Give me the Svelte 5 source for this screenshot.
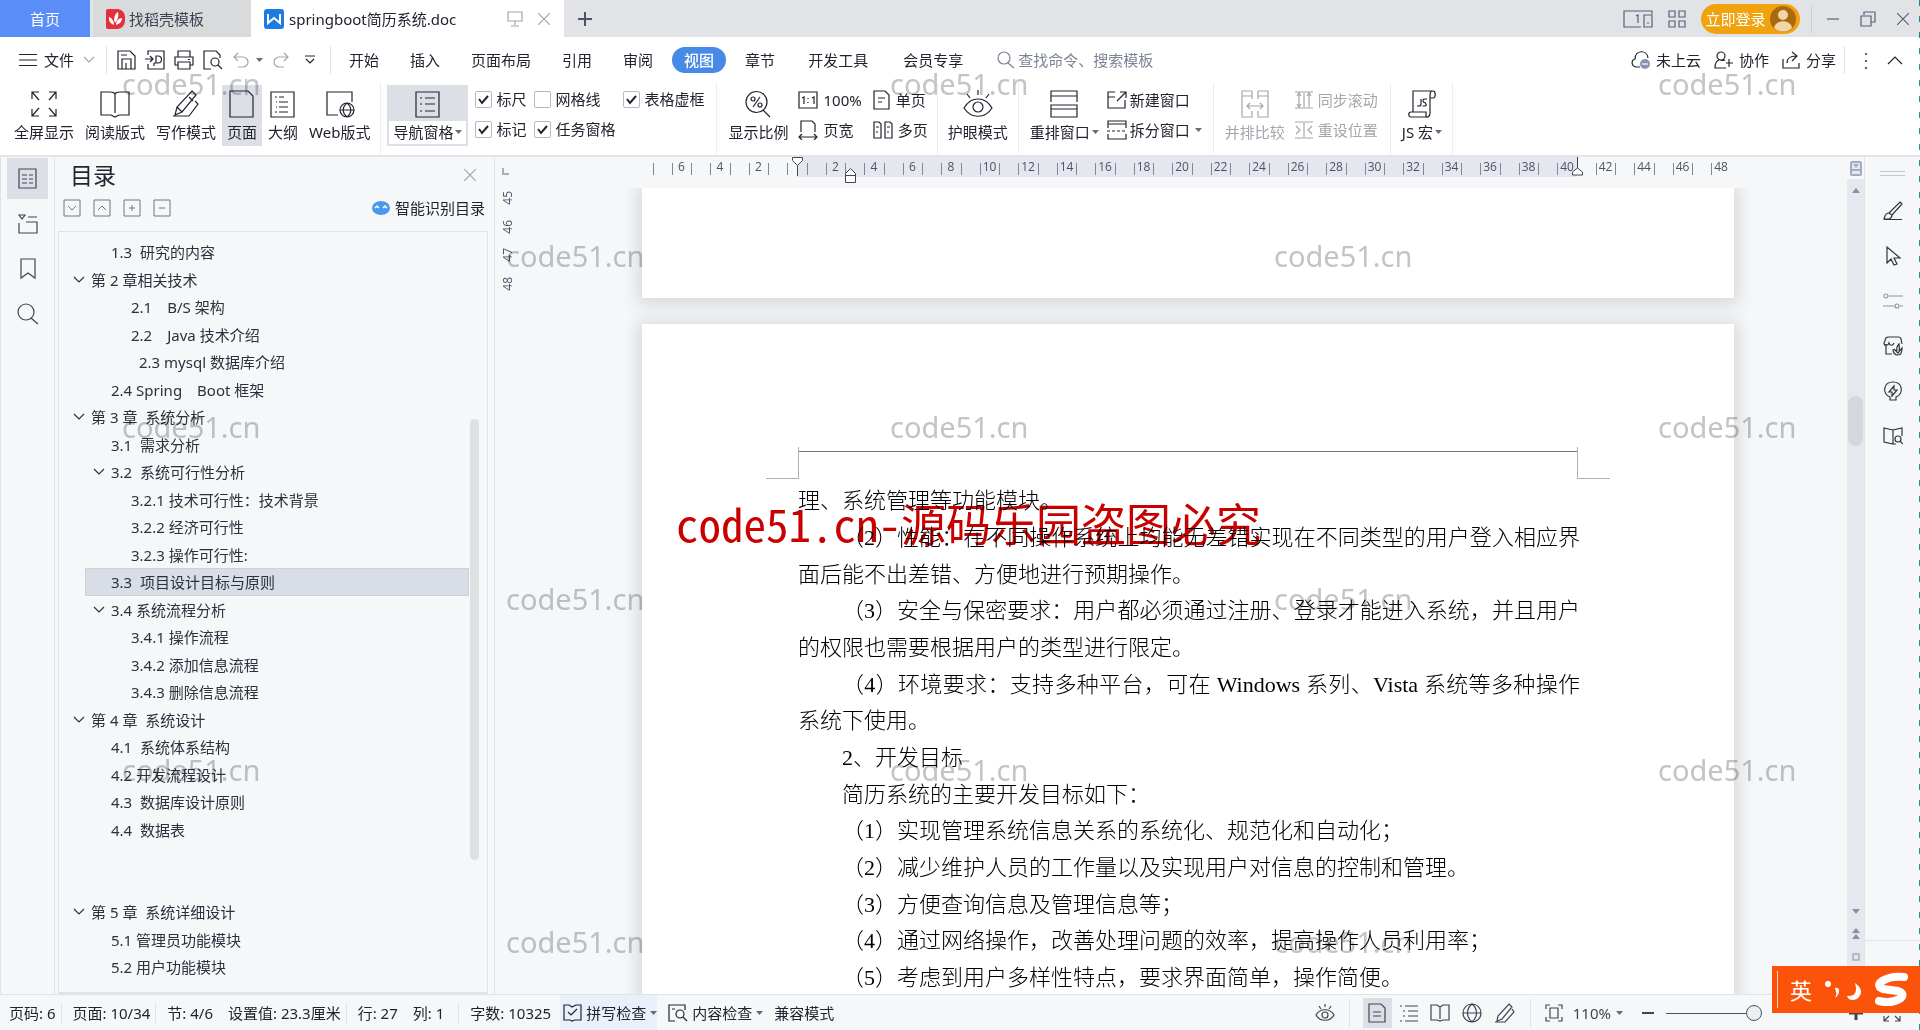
<script>
  // [width, height, path]
  const icons = {
    menu: [18, 14, 'M0 1.5h18M0 7h18M0 12.5h18'],
    down: [12, 8, 'M1 1l5 5 5-5'],
    up: [16, 10, 'M1 9l7-7 7 7'],
    save: [19, 20, 'M1 1h12l5 5v13H1zM5 19V9h9v10M9 13v6M4 5h6'],
    pdf: [20, 20, 'M3 5V1h16v18H3v-5M0 9h8M5 6l3 3-3 3M9 16v-3M11 13V6h2a3 3 0 010 7h-4'],
    print: [20, 20, 'M4 7V1h12v6M4 15H1V7h18v8h-3M4 12h12v7H4zM14 9.500h2'],
    preview: [20, 20, 'M8 19H1V1h12l4 4v3M16 12a4 4 0 11-8 0 4 4 0 018 0M15 15l4 4'],
    undo: [16, 16, 'M5 1L1 5l4 4M1 5h9a5 5 0 010 10H5'],
    redo: [16, 16, 'M11 1l4 4-4 4M15 5H6a5 5 0 000 10h5'],
    more: [10, 10, 'M0 1h10M1 4l4 4 4-4'],
    search: [18, 18, 'M13 7A6 6 0 111 7a6 6 0 0112 0M11 12l6 5'],
    lookup: [22, 22, 'M17 9A8 8 0 111 9a8 8 0 0116 0M14 15l7 6'],
    collab: [20, 18, 'M11 5a4 4 0 11-8 0 4 4 0 018 0M5 9c-3 1-4 3-4 8h11M6 9q3 1 5 0M12 12h7M15 8v8'],
    share: [19, 18, 'M1 8v9h16v-5M5 12c0-5 3-7 9-7M10 1l5 4-5 5'],
    full: [28, 28, 'M2 9V2h7M2 2l7 8M19 2h7v7M26 2l-7 8M2 19v7h7M2 26l7-8M26 19v7h-7M26 26l-7-8'],
    book: [30, 28, 'M15 4c-1-2-3-2-5-2H1v23h10l4 2 4-2h10V2h-9c-2 0-4 0-5 2zM15 4v19'],
    pen: [28, 28, 'M20 1l4 4L10 22l-7 3 2-8zM5 17l5 5M17 7l4 4M23 11l3 3-9 12H1'],
    page: [28, 28, 'M2 1h18l5 5v21H2z'],
    outline: [28, 28, 'M2 2h23v25H2zM6 7h2M10 7h5M10 12h9M10 17h9M6 22h2M10 22h9M7 12h1M7 17h1'],
    web: [30, 28, 'M13 25H2V2h25v10M29 20a7 7 0 11-14 0 7 7 0 0114 0M15 20h14M22 13c-5 4-5 10 0 14M22 13c5 4 5 10 0 14'],
    nav: [28, 28, 'M2 2h23v25H2zM6 8h2M6 14h2M6 21h2M11 8h10M11 14h10M11 21h10'],
    ratio: [28, 28, 'M23 12a10.500 10.500 0 11-21 0 10.500 10.500 0 0121 0M19 20l7 7M16 7L9 17M11 9a2 2 0 11-4 0 2 2 0 014 0M18 15a2 2 0 11-4 0 2 2 0 014 0'],
    one: [20, 18, 'M1 1h18v16H1zM4 7l2-1v7M14 7l2-1v7M10 7v1M10 11v1'],
    fit: [20, 20, 'M3 12V1h11l3 3v8M1 17h18M4 14l-3 3 3 3M16 14l3 3-3 3'],
    single: [18, 20, 'M1 1h11l4 4v14H1zM5 8h7M5 12h4'],
    multi: [20, 18, 'M1 1h5l2 2v14H1zM12 1h5l2 2v14h-7zM3 6h3M3 11h2M14 6h3M14 11h2'],
    eye: [30, 28, 'M1 18C8 6 22 6 29 18 22 29 8 29 1 18zM20 17a5 5 0 11-10 0 5 5 0 0110 0M15 0v5M4 4l3 4M26 4l-3 4'],
    arrange: [28, 28, 'M1 12V1h26v11M1 6h26M1 15h26v12H1zM1 19h26'],
    newwin: [20, 18, 'M8 1H1v16h17V9M1 6h7M10 10l9-9M13 1h6v6'],
    split: [20, 20, 'M1 8V1h18v7M1 4h18M0 11h3M5 11h3M10 11h3M15 11h3M1 14v5h18v-5'],
    compare: [28, 28, 'M11 1H1v26h10v-6M17 1h10v26H17v-6M11 1v8M17 1v8M1 6h10M17 6h10M6 16h16M9 13l-3 3 3 3M19 13l3 3-3 3'],
    sync: [18, 18, 'M0 1h18M0 17h18M4 2v14M9 2v14M14 2v14M2 5l2-3 2 3M2 13l2 3 2-3M12 5l2-3 2 3'],
    reset: [18, 18, 'M0 1h18M0 17h18M9 2v14M1 5l4 4-4 4M17 5l-4 4 4 4'],
    js: [28, 28, 'M5 22V1h20c3 0 3 7 0 7h-3v15c0 5-4 4-4 4H3c-3 0-3-5 0-5h15v5M25 1c-3 0-3 2-3 7M9 16h2q2 0 2-2V9M19 9h-2q-3 0-1.500 3l2 1q2 3-1 3h-2'],
    panel: [20, 21, 'M1 1h17v19H1zM4 7h5M4 11h5M4 15h5M11 7h4M11 11h4M11 15h4'],
    tabs: [20, 20, 'M1 1h6L4 5zM10 3h9M1 9v10h18V8H8'],
    bookmark: [16, 22, 'M1 1h14v19l-7-5-7 5z'],
    brush: [20, 20, 'M17 1l2 2L9 14l-3-2zM6 12c-4 0-4 3-5 6h5c3-1 3-3 3-4M1 18.500h18'],
    cursor: [18, 20, 'M3 1v16l4-4 3 6 3-1-3-6h6z'],
    sliders: [20, 16, 'M5 3a2 2 0 11-4 0 2 2 0 014 0M6 3h14M0 13h11M16 13a2 2 0 11-4 0 2 2 0 014 0M17 13h3'],
    shop: [20, 20, 'M3 8v10h6M1 7l2-5q0-1 3-1h9q3 0 3 2l1 5M1 7c0 3 4 3 5 0 1 3 4 3 5 0M10 13c0 4 1 6 5 6 3 0 4-2 4-7l-4 5-4-4M14 15c-1-4 1-6 2-7 0 2 1 4 0 7'],
    bulb: [20, 20, 'M7 19v-3C-1 13 0 1 10 1s11 12 3 15v3zM11 5l-5 6h3v4l5-6h-3z'],
    find: [20, 18, 'M10 3L1 1v14l9 2V3l9-2v8M10 17h3M18 12a3 3 0 11-6 0 3 3 0 016 0M17 14l3 3'],
    spell: [19, 18, 'M9 3L6 1H1v15h6l2 1 3-1h6V1h-5zM5 8l3 3 6-6'],
    check: [20, 18, 'M7 17H1V1h16v5M16 10a4 4 0 11-8 0 4 4 0 018 0M15 13l4 4M4 5h3'],
    seye: [20, 20, 'M1 12C5 5 15 5 19 12 15 19 5 19 1 12zM13 12a3 3 0 11-6 0 3 3 0 016 0M10 1v3M4 3l2 3M16 3l-2 3'],
    sdoc: [18, 20, 'M1 1h12l4 4v14H1zM5 9h8M5 13h8'],
    slist: [18, 18, 'M0 2h2M5 2h13M3 7h2M8 7h10M3 12h2M8 12h10M0 17h2M5 17h13'],
    sbook: [20, 18, 'M10 3L7 1H1v15h6l3 1 3-1h6V1h-6zM10 3v12'],
    globe: [20, 20, 'M19 10a9 9 0 11-18 0 9 9 0 0118 0M1 10h18M10 1c-6 5-6 13 0 18M10 1c6 5 6 13 0 18'],
    spen: [22, 20, 'M15 1l3 3L8 16l-5 2 1-5zM1 19h10L20 9l-2-3'],
    frame: [18, 18, 'M1 5V1h4M13 1h4v4M1 13v4h4M17 13v4h-4M5 4h8v10H5z'],
    sfull: [18, 18, 'M1 6V1h5M1 1l5 5M12 1h5v5M17 1l-5 5M1 12v5h5M1 17l5-5M17 12v5h-5M17 17l-5-5'],
    close: [12, 12, 'M0 0l12 12M12 0L0 12'],
    screen: [16, 16, 'M1 1h14v9H1zM8 10v4M4 15h8'],
    plus: [14, 14, 'M7 0v14M0 7h14'],
    device: [30, 18, 'M18 17H1V1h28v3M13 6l2-1v8M21 5h8v12h-8zM24 13h2'],
    grid: [18, 18, 'M1 1h6v6H1zM11 1h6v6h-6zM1 11h6v6H1zM11 11h6v6h-6z'],
    min: [12, 2, 'M0 1h12'],
    restore: [16, 16, 'M4 4V1h11v10h-4M1 5h10v10H1z'],
    boxdown: [18, 18, 'M1 1h16v16H1zM5 7l4 4 4-4'],
    boxup: [18, 18, 'M1 1h16v16H1zM5 11l4-4 4 4'],
    boxplus: [18, 18, 'M1 1h16v16H1zM9 6v6M6 9h6'],
    boxminus: [18, 18, 'M1 1h16v16H1zM6 9h6'],
  };

  const quick = ['save', 'pdf', 'print', 'preview'];
  const menus = ['开始', '插入', '页面布局', '引用', '审阅', '视图', '章节', '开发工具', '会员专享'];

  const views = [
    { icon: 'full', label: '全屏显示' },
    { icon: 'book', label: '阅读版式' },
    { icon: 'pen', label: '写作模式' },
    { icon: 'page', label: '页面', active: true },
    { icon: 'outline', label: '大纲' },
    { icon: 'web', label: 'Web版式' },
  ];

  let shows = [
    { label: '标尺', checked: true },
    { label: '网格线', checked: false },
    { label: '表格虚框', checked: true },
    { label: '标记', checked: true },
    { label: '任务窗格', checked: true },
  ];

  const sideLeft = [
    { icon: 'panel', label: '目录' },
    { icon: 'tabs', label: '章节' },
    { icon: 'bookmark', label: '书签' },
    { icon: 'lookup', label: '查找' },
  ];
  const sideRight = ['brush', 'cursor', 'sliders', 'shop', 'bulb', 'find'];

  // indent is the left edge of the text inside the list
  const tree = [
    { indent: 52, text: '1.3  研究的内容' },
    { indent: 32, text: '第 2 章相关技术', open: true },
    { indent: 72, text: '2.1\u3000B/S 架构' },
    { indent: 72, text: '2.2\u3000Java 技术介绍' },
    { indent: 80, text: '2.3 mysql 数据库介绍' },
    { indent: 52, text: '2.4 Spring\u3000Boot 框架' },
    { indent: 32, text: '第 3 章  系统分析', open: true },
    { indent: 52, text: '3.1  需求分析' },
    { indent: 52, text: '3.2  系统可行性分析', open: true },
    { indent: 72, text: '3.2.1 技术可行性：技术背景' },
    { indent: 72, text: '3.2.2 经济可行性' },
    { indent: 72, text: '3.2.3 操作可行性:' },
    { indent: 52, text: '3.3  项目设计目标与原则', selected: true },
    { indent: 52, text: '3.4 系统流程分析', open: true },
    { indent: 72, text: '3.4.1 操作流程' },
    { indent: 72, text: '3.4.2 添加信息流程' },
    { indent: 72, text: '3.4.3 删除信息流程' },
    { indent: 32, text: '第 4 章  系统设计', open: true },
    { indent: 52, text: '4.1  系统体系结构' },
    { indent: 52, text: '4.2 开发流程设计' },
    { indent: 52, text: '4.3  数据库设计原则' },
    { indent: 52, text: '4.4  数据表' },
    { indent: 52, text: '' },
    { indent: 52, text: '' },
    { indent: 32, text: '第 5 章  系统详细设计', open: true },
    { indent: 52, text: '5.1 管理员功能模块' },
    { indent: 52, text: '5.2 用户功能模块' },
  ];

  const lines = [
    { text: '理、系统管理等功能模块。' },
    { text: '（2）性能：在不同操作系统上均能无差错实现在不同类型的用户登入相应界', indent: true, full: true },
    { text: '面后能不出差错、方便地进行预期操作。' },
    { text: '（3）安全与保密要求：用户都必须通过注册、登录才能进入系统，并且用户', indent: true, full: true },
    { text: '的权限也需要根据用户的类型进行限定。' },
    { text: '（4）环境要求：支持多种平台，可在 Windows 系列、Vista 系统等多种操作', indent: true, full: true },
    { text: '系统下使用。' },
    { text: '2、开发目标', indent: true },
    { text: '简历系统的主要开发目标如下：', indent: true },
    { text: '（1）实现管理系统信息关系的系统化、规范化和自动化；', indent: true },
    { text: '（2）减少维护人员的工作量以及实现用户对信息的控制和管理。', indent: true },
    { text: '（3）方便查询信息及管理信息等；', indent: true },
    { text: '（4）通过网络操作，改善处理问题的效率，提高操作人员利用率；', indent: true },
    { text: '（5）考虑到用户多样性特点，要求界面简单，操作简便。', indent: true },
  ];

  // ruler geometry, measured from the left edge of the sheet
  const zero = 155;
  const unit = 19.25;
  const numbers = [];
  const ticks = [];
  for (let n = -6; n <= 48; n += 2) {
    if (n !== 0) numbers.push({ n: Math.abs(n), x: zero + n * unit });
  }
  for (let n = -7.5; n < 48; n += 1) {
    ticks.push(Math.round(zero + n * unit));
  }

  const stamps = [];
  for (let row = 0; row < 6; row++) {
    const odd = row % 2 === 1;
    for (let col = 0; col < (odd ? 2 : 3); col++) {
      stamps.push({ x: (odd ? 506 : 122) + col * 768, y: Math.round(64 + row * 171.5) });
    }
  }

  let zoom = 100;
</script>

{#snippet icon(name)}
  <svg class="ico" width={icons[name][0]} height={icons[name][1]} viewBox="0 0 {icons[name][0]} {icons[name][1]}" aria-hidden="true">
    <path d={icons[name][2]} />
  </svg>
{/snippet}

{#snippet caret()}
  <svg class="caret" width="7" height="4" viewBox="0 0 7 4" aria-hidden="true"><path d="M0 0h7L3.500 4z" /></svg>
{/snippet}

<div class="app" lang="zh-CN">
  <header class="titlebar">
    <button class="tab home">首页</button>
    <button class="tab docer">
      <svg width="19" height="20" viewBox="0 0 19 20" aria-hidden="true">
        <path fill="#e5303c" d="M2 0h9a8 8 0 018 8v4a8 8 0 01-8 8H2a2 2 0 01-2-2V2a2 2 0 012-2z" />
        <path fill="#fff" d="M8 16C2 14 3 9 3 8c3 1 5 4 5 8zM9 14c-2-5 0-9 3-11 1 4 0 8-3 11zM10 16c0-4 3-7 6-7 0 4-3 6-6 7z" />
      </svg>
      找稻壳模板
    </button>
    <div class="tab file">
      <svg width="20" height="20" viewBox="0 0 20 20" aria-hidden="true">
        <rect width="20" height="20" rx="3" fill="#1c7be6" />
        <path fill="none" stroke="#fff" stroke-width="2" d="M4 5v9l6-5 6 5V5" />
      </svg>
      <span class="name">springboot简历系统.doc</span>
      <button class="dim" aria-label="投屏">{@render icon('screen')}</button>
      <button class="dim" aria-label="关闭标签">{@render icon('close')}</button>
    </div>
    <button class="add" aria-label="新建">{@render icon('plus')}</button>
    <div class="window">
      <button aria-label="设备">{@render icon('device')}</button>
      <button aria-label="应用">{@render icon('grid')}</button>
      <button class="login">
        立即登录
        <svg width="26" height="26" viewBox="0 0 26 26" aria-hidden="true">
          <circle cx="13" cy="13" r="13" fill="#a8690f" />
          <circle cx="13" cy="9" r="5" fill="#f3d6a6" />
          <path fill="#f3d6a6" d="M4 22c1-9 17-9 18 0a13 13 0 01-18 0z" />
        </svg>
      </button>
      <i class="bar"></i>
      <button aria-label="最小化">{@render icon('min')}</button>
      <button class="restore" aria-label="还原">{@render icon('restore')}</button>
      <button aria-label="关闭">{@render icon('close')}</button>
    </div>
  </header>

  <nav class="menubar">
    <button class="filemenu">{@render icon('menu')} 文件 <span class="faint">{@render icon('down')}</span></button>
    <i class="bar"></i>
    <div class="quick">
      {#each quick as name}
        <button aria-label={name}>{@render icon(name)}</button>
      {/each}
      <button class="faint" aria-label="撤销">{@render icon('undo')}{@render caret()}</button>
      <button class="faint" aria-label="恢复">{@render icon('redo')}</button>
      <button class="last" aria-label="更多">{@render icon('more')}</button>
    </div>
    <i class="bar"></i>
    <div class="menus">
      {#each menus as m, i}
        <button class:pill={m === '视图'} class:wide={i > 6}>{m}</button>
      {/each}
    </div>
    <label class="search">
      {@render icon('search')}
      <input type="text" placeholder="查找命令、搜索模板" />
    </label>
    <div class="cloud">
      <button>
        <svg class="ico" width="20" height="20" viewBox="0 0 20 20" aria-hidden="true">
          <path d="M9 17H5C0 16 0 10 4 9c0-9 12-10 13-1" />
          <circle cx="14" cy="14" r="5" fill="#8a93b5" stroke="none" />
          <path stroke="#fff" d="M11 14h6" />
        </svg>
        未上云
      </button>
      <button>{@render icon('collab')} 协作</button>
      <button>{@render icon('share')} 分享</button>
      <i class="bar"></i>
      <button class="dots" aria-label="更多选项">⋮</button>
      <button aria-label="收起功能区">{@render icon('up')}</button>
    </div>
  </nav>

  <section class="ribbon">
    <div class="group first">
      {#each views as v}
        <button class="big" class:active={v.active}>{@render icon(v.icon)}<span>{v.label}</span></button>
      {/each}
    </div>
    <div class="group shows">
      <button class="big navpane">{@render icon('nav')}<span>导航窗格{@render caret()}</span></button>
      <div class="checks">
        {#each shows as s}
          <label><input type="checkbox" bind:checked={s.checked} />{s.label}</label>
        {/each}
      </div>
    </div>
    <div class="group ratio">
      <button class="big">{@render icon('ratio')}<span>显示比例</span></button>
      <div class="stack">
        <button>{@render icon('one')} 100%</button>
        <button>{@render icon('fit')} 页宽</button>
      </div>
      <div class="stack">
        <button>{@render icon('single')} 单页</button>
        <button>{@render icon('multi')} 多页</button>
      </div>
    </div>
    <div class="group care">
      <button class="big">{@render icon('eye')}<span>护眼模式</span></button>
    </div>
    <div class="group">
      <button class="big">{@render icon('arrange')}<span>重排窗口{@render caret()}</span></button>
      <div class="stack win">
        <button>{@render icon('newwin')} 新建窗口</button>
        <button>{@render icon('split')} 拆分窗口{@render caret()}</button>
      </div>
    </div>
    <div class="group off">
      <button class="big" disabled>{@render icon('compare')}<span>并排比较</span></button>
      <div class="stack">
        <button disabled>{@render icon('sync')} 同步滚动</button>
        <button disabled>{@render icon('reset')} 重设位置</button>
      </div>
    </div>
    <div class="group">
      <button class="big">{@render icon('js')}<span>JS 宏{@render caret()}</span></button>
    </div>
  </section>

  <main class="work">
    <aside class="strip">
      {#each sideLeft as s, i}
        <button class:active={i === 0} aria-label={s.label}>{@render icon(s.icon)}</button>
      {/each}
    </aside>

    <aside class="toc">
      <div class="toc-head">
        <h2>目录</h2>
        <button class="dim" aria-label="关闭目录">{@render icon('close')}</button>
      </div>
      <div class="toc-tools">
        <button aria-label="展开">{@render icon('boxdown')}</button>
        <button aria-label="收起">{@render icon('boxup')}</button>
        <button aria-label="增加">{@render icon('boxplus')}</button>
        <button aria-label="减少">{@render icon('boxminus')}</button>
        <button class="smart">
          <svg width="18" height="16" viewBox="0 0 18 16" aria-hidden="true">
            <ellipse cx="9" cy="8" rx="9" ry="7" fill="#4a98ee" />
            <path fill="none" stroke="#fff" stroke-width="1.500" d="M3 8l2-2 2 2M11 8l2-2 2 2" />
          </svg>
          智能识别目录
        </button>
      </div>
      <div class="tree">
        <ul>
          {#each tree as t}
            <li class:selected={t.selected} style="--indent: {t.indent}px">
              <span class="twist">{#if t.open}{@render icon('down')}{/if}</span>{t.text}
            </li>
          {/each}
        </ul>
        <div class="thumb"></div>
      </div>
    </aside>

    <section class="doc">
      <div class="hruler">
        <div class="corner"><span class="tabstop"></span></div>
        <div class="scale">
          <svg width="1092" height="31" viewBox="0 0 1092 31" aria-hidden="true">
            <rect class="live" x="155" y="0" width="780" height="20" />
            {#each ticks as x}
              <path class="tick" d="M{x + 0.5} 6v12" />
            {/each}
            {#each numbers as r}
              <text x={r.x} y="14">{r.n}</text>
            {/each}
            <path class="marker" d="M150.500 .5h10v3l-5 5-5-5zM155.500 8v11" />
            <path class="marker" d="M203.500 25.500v-9l5-5 5 5v9zM203.500 18.500h10" />
            <path class="marker" d="M935.500 0v11l-5 4v3h10v-3l-5-4" />
          </svg>
        </div>
      </div>
      <div class="canvas">
        <div class="vruler"><span>45</span><span>46</span><span>47</span><span>48</span></div>
        <div class="sheets">
          <article class="sheet tail"></article>
          <article class="sheet">
            <div class="corners"><i></i><b></b><i></i></div>
            <div class="text">
              {#each lines as l}
                <p class:indent={l.indent} class:full={l.full}>{l.text}</p>
              {/each}
            </div>
          </article>
        </div>
      </div>
    </section>

    <div class="vscroll">
      <button class="toggle" aria-label="标尺开关">
        <svg width="12" height="15" viewBox="0 0 12 15" aria-hidden="true">
          <rect x="1" y="1" width="10" height="13" rx="1" fill="#e4e8f0" stroke="#a3adc0" stroke-width="2" />
          <path fill="#a3adc0" d="M3 3h6L6 7zM1 8h10v2H1z" />
        </svg>
      </button>
      <div class="track">
        <svg width="8" height="5" viewBox="0 0 8 5" aria-hidden="true"><path d="M4 0l4 5H0z" /></svg>
        <div class="grip"></div>
        <svg width="8" height="5" viewBox="0 0 8 5" aria-hidden="true"><path d="M0 0h8L4 5z" /></svg>
        <svg width="8" height="11" viewBox="0 0 8 11" aria-hidden="true"><path d="M4 0l4 5H0zM4 6l4 5H0z" /></svg>
        <svg width="8" height="8" viewBox="0 0 8 8" aria-hidden="true"><rect x="1" y="1" width="6" height="6" fill="none" stroke="#8a90a3" /></svg>
      </div>
    </div>

    <aside class="tools">
      <i class="drag"></i>
      {#each sideRight as name}
        <button class:muted={name === 'sliders'} aria-label={name}>{@render icon(name)}</button>
      {/each}
      <i class="rule"></i>
    </aside>
  </main>

  <footer class="status">
    <span class="cell">页码: 6</span>
    <span class="cell">页面: 10/34</span>
    <span>节: 4/6</span>
    <span class="cell">设置值: 23.3厘米</span>
    <span>行: 27</span>
    <span class="cell count">列: 1</span>
    <span>字数: 10325</span>
    <div class="proof">
      <button class="spell">{@render icon('spell')} 拼写检查 {@render caret()}</button>
      <button>{@render icon('check')} 内容检查 {@render caret()}</button>
      <button>兼容模式</button>
    </div>
    <div class="modes">
      <button aria-label="护眼模式">{@render icon('seye')}</button>
      <i class="bar"></i>
      <button class="active" aria-label="页面视图">{@render icon('sdoc')}</button>
      <button aria-label="大纲视图">{@render icon('slist')}</button>
      <button aria-label="阅读版式">{@render icon('sbook')}</button>
      <button aria-label="Web版式">{@render icon('globe')}</button>
      <button aria-label="写作模式">{@render icon('spen')}</button>
      <i class="bar"></i>
      <button aria-label="最佳比例">{@render icon('frame')}</button>
      <button class="percent">110% {@render caret()}</button>
      <button class="step" aria-label="缩小">{@render icon('min')}</button>
      <input type="range" min="0" max="100" bind:value={zoom} aria-label="显示比例" />
      <button class="step plus" aria-label="放大">{@render icon('plus')}</button>
      <button aria-label="全屏">{@render icon('sfull')}</button>
    </div>
  </footer>

  <div class="overlay" aria-hidden="true">
    {#each stamps as s}
      <span class="stamp" style="left: {s.x}px; top: {s.y}px">code51.cn</span>
    {/each}
    <span class="notice">code51.cn-源码乐园盗图必究</span>
    <i class="edge"></i>
  </div>

  <div class="ime">
    <i></i>
    <span>英</span>
    <svg width="92" height="44" viewBox="0 0 92 44" aria-hidden="true">
      <circle cx="6" cy="16" r="3" fill="#fff" />
      <path fill="#fff" d="M13 20q4-1 4 3 0 4-4 7 2-4 1-6zM33 15q11 8 2 16-8 3-10-3 12 1 8-13z" />
      <path fill="none" stroke="#fff" stroke-width="8" stroke-linecap="round" d="M82 9C64 7 50 17 61 21l15 2c12 4-2 14-19 10" />
    </svg>
  </div>
</div>

<style>
  :global(body) {
    margin: 0;
    overflow: hidden;
  }

  .app {
    position: relative;
    display: flex;
    flex-direction: column;
    height: 100vh;
    overflow: hidden;
    background: #f5f7f9;
    color: #20242e;
    font-family: "Noto Sans", "Noto Sans CJK SC", sans-serif;
    font-size: 15px;
    line-height: 20px;
    white-space: nowrap;
  }

  button,
  input {
    font: inherit;
    color: inherit;
    margin: 0;
  }

  button {
    display: flex;
    align-items: center;
    justify-content: center;
    padding: 0;
    border: 0;
    background: none;
  }

  svg { flex: none; }

  .ico {
    fill: none;
    stroke: currentColor;
    stroke-width: 1.2;
  }

  .caret {
    fill: #666b76;
    margin-left: 2px;
  }

  .bar {
    width: 1px;
    height: 28px;
    background: #dfe1e5;
  }

  .dim, .faint { color: #a0a5ae; }

  /* title bar */
  .titlebar {
    display: flex;
    height: 37px;
    background: #e1e3e7;
  }

  .tab {
    display: flex;
    align-items: center;
  }

  .home {
    width: 90px;
    background: #5b8df8;
    color: #fff;
  }

  .docer {
    justify-content: flex-start;
    gap: 4px;
    width: 158px;
    margin-left: 3px;
    padding-left: 13px;
    background: #d9dadc;
    color: #3c4252;
  }

  .file {
    gap: 5px;
    width: 300px;
    padding-left: 13px;
    background: #fff;
  }

  .file .name { flex: 1; }
  .file .dim { margin-right: 10px; }
  .file .dim:last-child { margin-right: 14px; }

  .add {
    margin-left: 14px;
    color: #4d5466;
  }

  .add .ico { stroke-width: 2; }

  .window {
    display: flex;
    align-items: center;
    gap: 15px;
    margin-left: auto;
    padding-right: 11px;
    color: #59617a;
  }

  .window .bar { margin: 0 0 0 -4px; background: #c9ccd3; }
  .window .restore { margin: 0 6px; }

  .login {
    gap: 4px;
    width: 99px;
    height: 30px;
    border-radius: 15px;
    background: #f0a30f;
    color: #fff;
  }

  /* menu bar */
  .menubar {
    display: flex;
    align-items: center;
    height: 46px;
    background: #fff;
  }

  .filemenu {
    gap: 7px;
    padding: 0 11px 0 19px;
  }

  .filemenu .faint { display: flex; margin-left: 2px; }

  .quick {
    display: flex;
    align-items: center;
    gap: 9px;
    padding: 0 15px 0 10px;
  }

  .quick .faint { margin-left: 1px; }
  .quick .faint .caret { margin-left: 7px; }
  .quick .last { margin-left: 7px; }

  .menus {
    display: flex;
    gap: 7px;
    padding-left: 6px;
  }

  .menus button {
    height: 26px;
    padding: 0 12px;
    border-radius: 13px;
  }

  .menus .wide { padding: 0 14px; }

  .menus .pill {
    background: #4689e6;
    color: #fff;
    font-weight: 500;
  }

  .search {
    display: flex;
    align-items: center;
    gap: 3px;
    margin-left: 20px;
    color: #7d8496;
  }

  .search input {
    width: 150px;
    padding: 0;
    border: 0;
    outline: none;
    background: none;
  }

  .search input::placeholder { color: #7d8496; opacity: 1; }

  .cloud {
    display: flex;
    align-items: center;
    gap: 13px;
    margin-left: auto;
    padding-right: 17px;
  }

  .cloud button { gap: 5px; }
  .cloud .bar { margin-left: -5px; }
  .cloud .dots { width: 16px; font-size: 20px; color: #59617a; }

  /* ribbon */
  .ribbon {
    display: flex;
    height: 72px;
    background: #fff;
    border-bottom: 2px solid #e2e4e7;
  }

  .group {
    display: flex;
    gap: 1px;
    height: 61px;
    padding: 2px 5px 8px 6px;
    border-right: 1px solid #eceef1;
  }

  .first { padding-left: 9px; }
  .shows { padding-right: 12px; }
  .ratio { padding-right: 9px; }
  .care { padding-left: 5px; }

  .big {
    flex-direction: column;
    gap: 4px;
    height: 61px;
    padding: 0 5px;
  }

  .big span { display: flex; align-items: center; }

  .active { background: #dce0e6; }

  .navpane {
    border: 2px solid #dce0e6;
    background: linear-gradient(#dce0e6 34px, #fff 34px);
    padding: 0 4px;
  }

  .checks {
    display: grid;
    grid-template-columns: 59px 89px auto;
    align-content: space-between;
    height: 50px;
    padding: 4px 0 0 6px;
  }

  .checks label {
    display: flex;
    align-items: center;
    gap: 4px;
  }

  .checks input {
    appearance: none;
    width: 17px;
    height: 17px;
    border: 1px solid #b5b9c0;
    border-radius: 2px;
    background: #fff;
  }

  .checks input:checked {
    background: #fff url("data:image/svg+xml,%3Csvg xmlns='http://www.w3.org/2000/svg' viewBox='0 0 15 15'%3E%3Cpath d='M3 7l3 4 6-7' fill='none' stroke='%2320242e' stroke-width='2'/%3E%3C/svg%3E");
  }

  .stack {
    display: flex;
    flex-direction: column;
    justify-content: space-between;
    align-items: flex-start;
    height: 52px;
    padding: 4px 0 0 4px;
  }

  .stack + .stack { padding-left: 10px; }
  .stack button { gap: 5px; height: 22px; }
  .win { padding: 4px 6px 0 2px; }
  .win button { gap: 3px; }
  .off { color: #a3a6ac; padding-right: 12px; }
  .stack button:disabled, .big:disabled { color: #a3a6ac; }

  /* work area */
  .work {
    display: flex;
    flex: 1;
    min-height: 0;
  }

  .strip {
    display: flex;
    flex-direction: column;
    gap: 4px;
    box-sizing: border-box;
    width: 55px;
    padding: 1px 0 0 6px;
    border-left: 1px solid #dfe2e6;
    border-right: 1px solid #dfe2e6;
    color: #3f4554;
  }

  .strip button { width: 41px; height: 41px; }

  .toc {
    display: flex;
    flex-direction: column;
    box-sizing: border-box;
    width: 440px;
    padding: 0 6px 0 3px;
    border-right: 1px solid #dfe2e6;
  }

  .toc-head {
    display: flex;
    align-items: center;
    justify-content: space-between;
    height: 36px;
    padding: 0 12px;
  }

  h2 {
    margin: 0;
    font-size: 23px;
    font-weight: 400;
    line-height: 32px;
  }

  .toc-tools {
    display: flex;
    align-items: center;
    gap: 12px;
    height: 30px;
    padding: 0 3px 8px 5px;
    color: #6f7480;
  }

  .toc-tools .ico { stroke-width: 1; }

  .smart {
    gap: 5px;
    margin-left: auto;
    color: #20242e;
  }

  .tree {
    display: flex;
    flex: 1;
    min-height: 0;
    overflow: hidden;
    border: 1px solid #dfe2e6;
    border-bottom-width: 2px;
  }

  ul {
    flex: 1;
    margin: 0;
    padding: 6px 1px 0 0;
    list-style: none;
  }

  li {
    display: flex;
    align-items: center;
    height: 28px;
    white-space: pre;
    color: #2c313d;
  }

  li:nth-child(even) { height: 27px; }

  .twist {
    display: flex;
    width: 18px;
    margin-left: calc(var(--indent) - 18px);
  }

  .selected {
    box-sizing: border-box;
    margin-left: 26px;
    border: 1px solid #ccd1d8;
    background: #d9dde5;
  }

  .selected .twist { margin-left: 7px; }

  .thumb {
    width: 9px;
    height: 441px;
    margin: 187px 8px 0 0;
    border-radius: 5px;
    background: #dfe0e2;
  }

  .doc {
    display: flex;
    flex: 1;
    flex-direction: column;
    min-width: 0;
  }

  .hruler {
    display: flex;
    height: 31px;
  }

  .corner {
    box-sizing: border-box;
    width: 34px;
    padding: 11px 0 0 7px;
  }

  .tabstop {
    display: block;
    width: 5px;
    height: 5px;
    border-left: 2px solid #a9adb5;
    border-bottom: 2px solid #a9adb5;
  }

  .scale {
    display: flex;
    flex: 1;
    justify-content: center;
    overflow: hidden;
  }

  .hruler .live { fill: #e4e8ee; }
  .hruler .tick { stroke: #7f8798; }
  .hruler text { fill: #4b5263; font-size: 12px; font-family: "Open Sans", sans-serif; text-anchor: middle; }
  .hruler .marker { fill: #fff; stroke: #3f4554; }

  .canvas {
    display: flex;
    flex: 1;
    min-height: 0;
  }

  .vruler {
    display: flex;
    flex-direction: column;
    gap: 15px;
    width: 34px;
    padding-top: 3px;
    box-sizing: border-box;
    color: #4b5263;
    font-family: "Open Sans", sans-serif;
    font-size: 12px;
  }

  .vruler span {
    writing-mode: vertical-rl;
    transform: rotate(180deg);
    align-self: flex-start;
    margin-left: 3px;
  }

  .sheets {
    display: flex;
    flex: 1;
    flex-direction: column;
    align-items: center;
    gap: 26px;
    overflow: hidden;
  }

  .sheet {
    box-sizing: border-box;
    width: 1092px;
    flex: 1 0 auto;
    padding: 123px 124px 0;
    background: #fff;
    box-shadow: 0 2px 16px 5px rgba(0, 0, 0, 0.12);
  }

  .tail {
    flex: none;
    height: 110px;
    padding: 0;
  }

  .corners {
    display: flex;
    height: 32px;
  }

  .corners i {
    box-sizing: border-box;
    width: 33px;
    border: solid #b0b0b0;
    border-width: 0 1px 1px 0;
  }

  .corners i:last-child { border-width: 0 0 1px 1px; }

  .corners b {
    flex: 1;
    margin-top: 4px;
    border-top: 1px solid #777;
  }

  .text {
    padding: 3px 30px 0 32px;
    color: #000;
    font-family: "Liberation Serif", "Noto Sans CJK SC", serif;
    font-size: 22px;
    font-weight: 300;
    text-spacing-trim: space-all;
  }

  p {
    height: 37px;
    margin: 0;
    line-height: 37px;
  }

  p:nth-child(3n) { height: 36px; }
  .indent { padding-left: 44px; }
  .full { text-align: justify; text-align-last: justify; white-space: normal; }

  .vscroll {
    display: flex;
    flex-direction: column;
    width: 17px;
  }

  .toggle { height: 22px; }

  .track {
    display: flex;
    flex: 1;
    flex-direction: column;
    align-items: center;
    gap: 14px;
    padding: 9px 0 33px;
    background: #e6e8ef;
    fill: #8a90a3;
  }

  .grip {
    width: 15px;
    height: 50px;
    margin: 189px 0 auto;
    border-radius: 8px;
    background: #d5d7de;
  }

  .tools {
    display: flex;
    flex-direction: column;
    align-items: center;
    box-sizing: border-box;
    width: 56px;
    border-left: 1px solid #e3e5e9;
    color: #30343f;
  }

  .drag {
    width: 25px;
    height: 3px;
    margin: 14px 0 12px;
    border: solid #c5c8cd;
    border-width: 1px 0;
  }

  .tools button { height: 45px; }
  .tools .muted { color: #9096a0; }

  .rule {
    width: 100%;
    height: 1px;
    margin: auto 0 53px;
    background: #dfe2e6;
  }

  /* status bar */
  .status {
    display: flex;
    align-items: center;
    height: 35px;
    border-top: 1px solid #dfe2e6;
    gap: 15px;
    padding-left: 9px;
  }

  .status .caret { margin-left: 0; }

  .cell {
    margin-right: -4px;
    padding-right: 5px;
    border-right: 1px solid #e0e3e7;
  }

  .cell.count { padding-right: 14px; }

  .proof {
    display: flex;
    gap: 11px;
    height: 35px;
    margin-left: -6px;
  }

  .proof button { gap: 4px; }
  .proof .spell { background: #e9f0fa; padding-left: 3px; }

  .modes {
    display: flex;
    align-items: center;
    gap: 12px;
    margin-left: auto;
    padding-right: 19px;
    color: #3f4554;
  }

  .modes .bar { margin: 0 2px; }

  .modes .active {
    width: 29px;
    height: 30px;
    margin: 0 -4px 0 -1px;
  }

  .percent { margin: 0 3px 0 -2px; gap: 5px; }
  .step .ico { stroke-width: 3; }
  .step { margin-left: 4px; }
  .plus { margin: 0 8px 0 75px; }

  .modes input {
    appearance: none;
    width: 96px;
    height: 18px;
    background: linear-gradient(#4d5361, #4d5361) no-repeat 0 9px / 80px 1px;
  }

  .modes input::-webkit-slider-thumb {
    appearance: none;
    box-sizing: border-box;
    width: 16px;
    height: 16px;
    border: 1px solid #4d5361;
    border-radius: 50%;
    background: #eceef0;
  }

  /* layers above the window */
  .overlay {
    position: absolute;
    inset: 0;
    overflow: hidden;
    pointer-events: none;
    mix-blend-mode: multiply;
  }

  .stamp {
    position: absolute;
    color: #c4c4c6;
    font-size: 29px;
    line-height: 40px;
  }

  .notice {
    position: absolute;
    left: 676px;
    top: 493px;
    color: #c80000;
    font-family: "Noto Sans CJK SC", sans-serif;
    font-size: 45px;
    line-height: 60px;
    font-feature-settings: "hwid";
  }

  .edge {
    position: absolute;
    inset: 0 0 0 auto;
    width: 1px;
    background: repeating-linear-gradient(#1f97a5 0 6px, transparent 6px 16px);
  }

  .ime {
    position: absolute;
    right: 0;
    bottom: 17px;
    display: flex;
    align-items: center;
    gap: 10px;
    width: 148px;
    height: 47px;
    box-sizing: border-box;
    padding-left: 5px;
    background: #fb540a;
    color: #fff;
    font-size: 22px;
  }

  .ime i {
    width: 1px;
    height: 37px;
    margin-right: 2px;
    background: #ffd2b8;
  }
</style>
